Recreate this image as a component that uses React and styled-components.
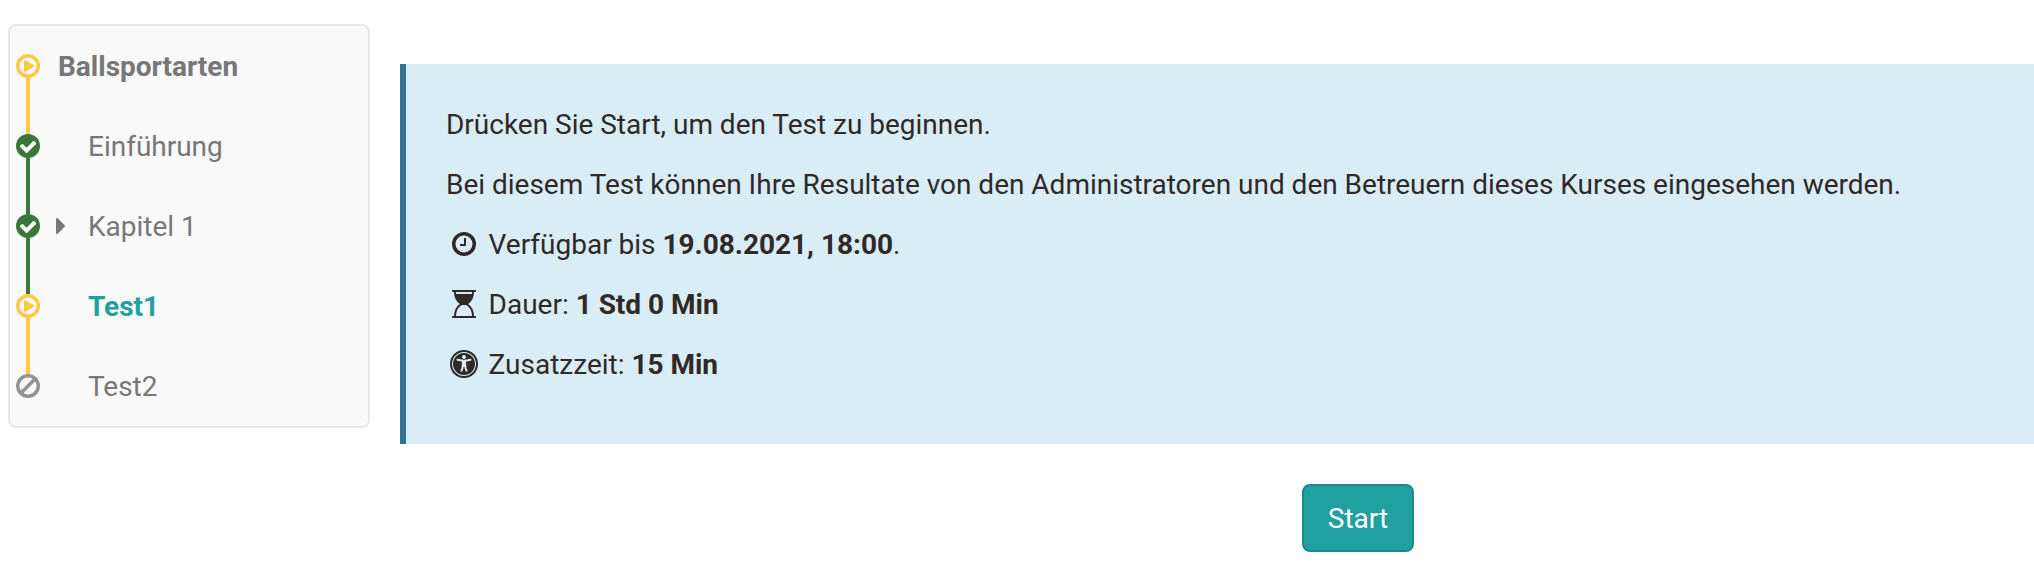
import React from 'react';
import styled, { createGlobalStyle } from 'styled-components';

const GlobalStyle = createGlobalStyle`
  * { box-sizing: border-box; }
  body {
    margin: 0;
    background: #fff;
    color: #2f2a27;
    font-family: Roboto, sans-serif;
    font-size: 28px;
    line-height: 40px;
    letter-spacing: -0.01px;
    overflow: hidden;
  }
`;

const Page = styled.div`
  display: flex;
  align-items: flex-start;
  gap: 30px;
  height: 572px;
  padding: 24px 0 0 8px;
  overflow: hidden;
`;

const Menu = styled.ul`
  flex: none;
  width: 362px;
  margin: 0;
  padding: 0;
  list-style: none;
  background: #f9f9f9;
  border: 2px solid #e7e7e7;
  border-radius: 8px;
`;

const MenuItem = styled.li`
  display: flex;
  align-items: center;
  height: 80px;
  padding-left: 6px;
  color: ${({ $active }) => ($active ? '#20a0a0' : '#777')};
  font-weight: ${({ $bold }) => ($bold ? 700 : 400)};
`;

const Status = styled.span`
  position: relative;
  display: flex;
  flex: none;
  width: 24px;
  height: 24px;
  color: ${({ $color }) => $color};

  &::after {
    content: '';
    display: ${({ $last }) => ($last ? 'none' : 'block')};
    position: absolute;
    top: 24px;
    left: 10px;
    width: 4px;
    height: 56px;
    background: currentColor;
  }
`;

const Toggle = styled.span`
  display: flex;
  flex: none;
  width: ${({ $root }) => ($root ? '18px' : '48px')};
  padding-left: 16px;
`;

const Text = styled.span`
  padding-top: 2px;
`;

const Main = styled.main`
  display: flex;
  flex: none;
  flex-direction: column;
  align-items: center;
  gap: 40px;
  width: 1916px;
  padding-top: 40px;
`;

const InfoBox = styled.section`
  width: 100%;
  padding: 40px;
  background: #d9edf6;
  border-left: 6px solid #31708f;
`;

const Line = styled.p`
  display: flex;
  align-items: center;
  height: 40px;
  margin: 0 0 20px;
  white-space: pre;
`;

const IconSlot = styled.span`
  display: flex;
  justify-content: center;
  width: 36px;
  margin-right: 6.6px;
`;

const StartButton = styled.button`
  width: 112px;
  height: 68px;
  padding: 2px 0 0;
  border: 2px solid #1d8a8a;
  border-radius: 8px;
  background: #20a0a0;
  color: #fff;
  font: inherit;
`;

const Glyph = ({ w, h, box, children }) => (
  <svg width={w} height={h} viewBox={box} fill="currentColor" aria-hidden="true">
    {children}
  </svg>
);

const Ring = () => (
  <circle cx="768" cy="768" r="656" fill="none" stroke="currentColor" strokeWidth="224" />
);

const PlayIcon = () => (
  <Glyph w="24" h="24" box="0 0 1536 1536">
    <Ring />
    <path d="M1184 768q0 37-32 55l-544 320q-15 9-32 9-16 0-32-8-32-19-32-56v-640q0-37 32-56 33-18 64 1l544 320q32 18 32 55z" />
  </Glyph>
);

const CheckIcon = () => (
  <Glyph w="24" h="24" box="0 0 1536 1536">
    <circle cx="768" cy="768" r="768" />
    <path
      fill="#f9f9f9"
      d="M1284 606q0-28-18-46l-91-90q-19-19-45-19t-45 19l-408 407-226-226q-19-19-45-19t-45 19l-91 90q-18 18-18 46 0 27 18 45l362 362q19 19 45 19 27 0 46-19l543-543q18-18 18-45z"
    />
  </Glyph>
);

const BanIcon = () => (
  <Glyph w="24" h="24" box="0 0 1536 1536">
    <Ring />
    <path d="M340 1196L1196 340" fill="none" stroke="currentColor" strokeWidth="224" />
  </Glyph>
);

const CaretIcon = () => (
  <Glyph w="9" h="16" box="0 0 576 1024">
    <path d="M576 512q0 26-19 45l-448 448q-19 19-45 19t-45-19-19-45v-896q0-26 19-45t45-19 45 19l448 448q19 19 19 45z" />
  </Glyph>
);

const ClockIcon = () => (
  <Glyph w="24" h="24" box="0 0 1536 1536">
    <Ring />
    <path d="M896 416v448q0 14-9 23t-23 9h-320q-14 0-23-9t-9-23v-64q0-14 9-23t23-9h224v-352q0-14 9-23t23-9h64q14 0 23 9t9 23z" />
  </Glyph>
);

const HourglassIcon = () => (
  <Glyph w="24" h="28" box="0 0 1536 1792">
    <path
      fillRule="evenodd"
      d="M1408 128q0 261-106.5 461.5t-266.5 306.5q160 106 266.5 306.5t106.5 461.5h96q14 0 23 9t9 23v64q0 14-9 23t-23 9h-1472q-14 0-23-9t-9-23v-64q0-14 9-23t23-9h96q0-261 106.5-461.5t266.5-306.5q-160-106-266.5-306.5t-106.5-461.5h-96q-14 0-23-9t-9-23v-64q0-14 9-23t23-9h1472q14 0 23 9t9 23v64q0 14-9 23t-23 9h-96zM1280 128h-1024q0 66 9 128h1006q9-61 9-128zM1280 1664q0-130-34-249.500t-90.500-208-126.500-152-146-94.500h-230q-76 31-146 94.500t-126.500 152-90.500 208-34 249.500h1024z"
    />
  </Glyph>
);

const AccessIcon = () => (
  <Glyph w="28" h="28" box="0 0 1792 1792">
    <circle cx="896" cy="896" r="832" fill="none" stroke="currentColor" strokeWidth="128" />
    <circle cx="896" cy="896" r="704" />
    <g fill="#d9edf6">
      <circle cx="896" cy="448" r="128" />
      <path d="M1374 609q-6-26-28.500-39.500t-48.500-7.500q-261 62-401 62t-401-62q-26-6-48.500 7.500t-28.500 39.500 7.500 48.500 39.500 28.500q194 46 303 58-2 158-15.500 269t-26.500 155.500-41 115.500l-9 21q-10 25 1 49t36 34q9 4 23 4 44 0 60-41l8-20q54-139 71-259h42q17 120 71 259l8 20q16 41 60 41 14 0 23-4 25-10 36-34t1-49l-9-21q-28-71-41-115.500t-26.500-155.500-15.500-269q109-12 303-58 26-6 39.500-28.500t7.500-48.500z" />
    </g>
  </Glyph>
);

const statuses = {
  running: { color: '#ffc947', Icon: PlayIcon },
  done: { color: '#3c763d', Icon: CheckIcon },
  blocked: { color: '#939393', Icon: BanIcon },
};

const items = [
  { label: 'Ballsportarten', status: 'running', root: true, bold: true },
  { label: 'Einführung', status: 'done' },
  { label: 'Kapitel 1', status: 'done', expandable: true },
  { label: 'Test1', status: 'running', active: true, bold: true },
  { label: 'Test2', status: 'blocked' },
];

export default function App() {
  return (
    <>
      <GlobalStyle />
      <Page>
        <Menu>
          {items.map(({ label, status, root, bold, active, expandable }, i) => {
            const { color, Icon } = statuses[status];
            return (
              <MenuItem key={label} $bold={bold} $active={active}>
                <Status $color={color} $last={i === items.length - 1}>
                  <Icon />
                </Status>
                <Toggle $root={root}>{expandable && <CaretIcon />}</Toggle>
                <Text>{label}</Text>
              </MenuItem>
            );
          })}
        </Menu>
        <Main>
          <InfoBox>
            <Line>
              <Text>Drücken Sie Start, um den Test zu beginnen.</Text>
            </Line>
            <Line>
              <Text>
                Bei diesem Test können Ihre Resultate von den Administratoren und den Betreuern dieses Kurses eingesehen werden.
              </Text>
            </Line>
            <Line>
              <IconSlot><ClockIcon /></IconSlot>
              <Text>Verfügbar bis <b>19.08.2021, 18:00</b>.</Text>
            </Line>
            <Line>
              <IconSlot><HourglassIcon /></IconSlot>
              <Text>Dauer: <b>1 Std 0 Min</b></Text>
            </Line>
            <Line>
              <IconSlot><AccessIcon /></IconSlot>
              <Text>Zusatzzeit: <b>15 Min</b></Text>
            </Line>
          </InfoBox>
          <StartButton type="button">Start</StartButton>
        </Main>
      </Page>
    </>
  );
}
